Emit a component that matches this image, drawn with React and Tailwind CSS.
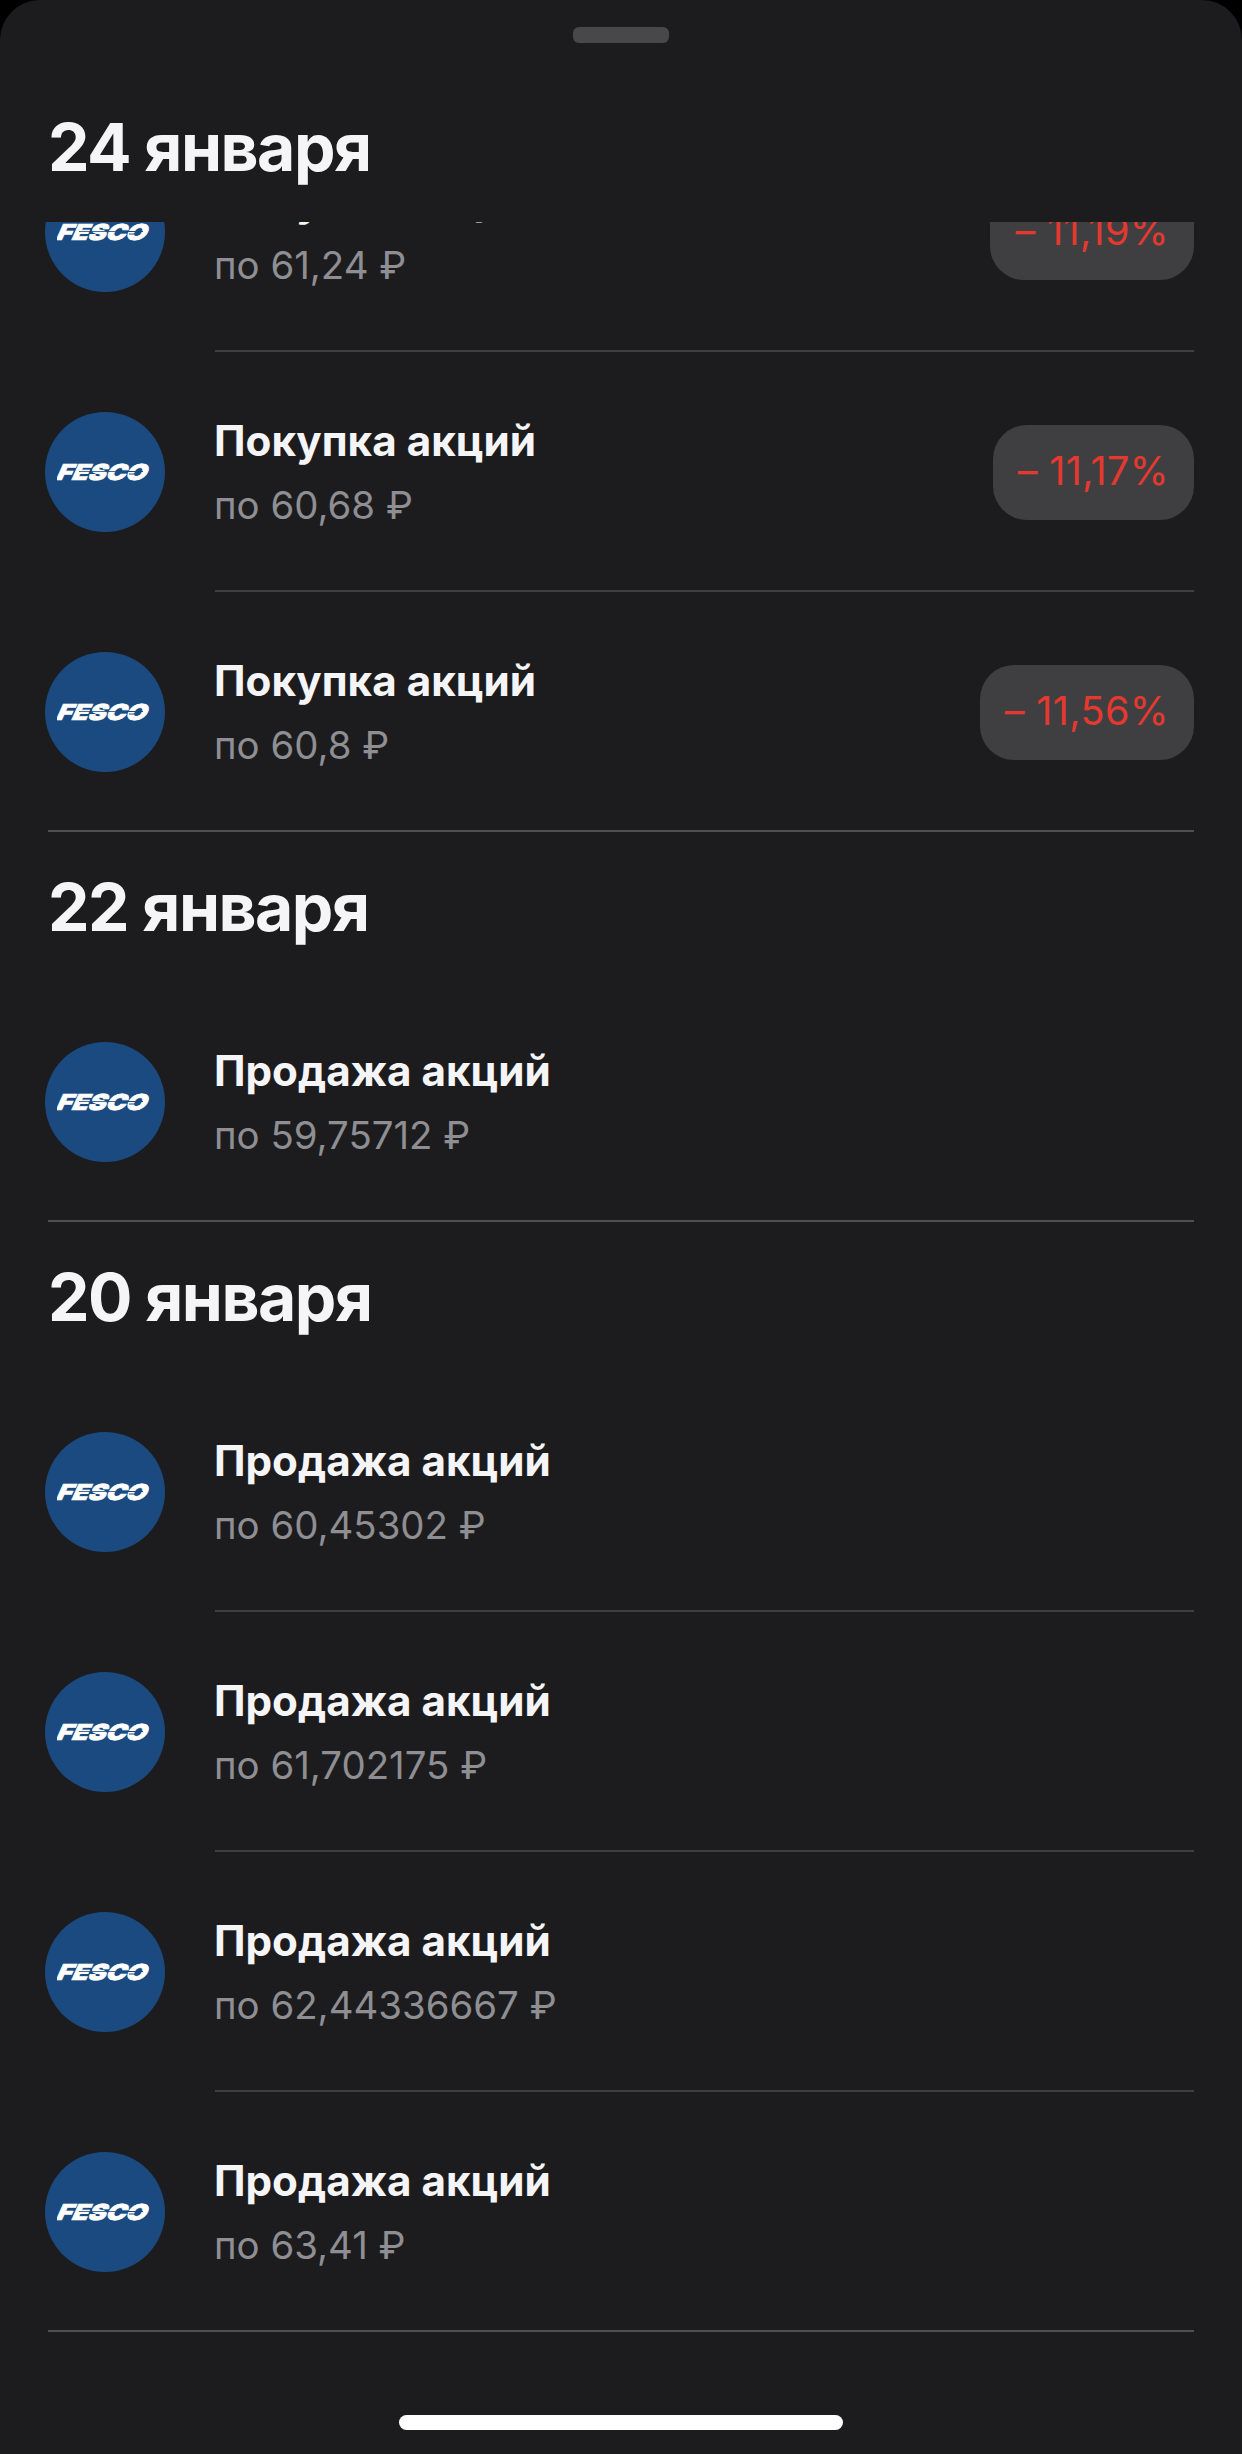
import React from "react";

const sections = [
  {
    title: "22 января",
    rows: [{ name: "Продажа акций", price: "по 59,75712 ₽" }],
  },
  {
    title: "20 января",
    rows: [
      { name: "Продажа акций", price: "по 60,45302 ₽" },
      { name: "Продажа акций", price: "по 61,702175 ₽" },
      { name: "Продажа акций", price: "по 62,44336667 ₽" },
      { name: "Продажа акций", price: "по 63,41 ₽" },
    ],
  },
];

const firstRows = [
  { name: "Покупка акций", price: "по 61,24 ₽", change: "– 11,19%" },
  { name: "Покупка акций", price: "по 60,68 ₽", change: "– 11,17%" },
  { name: "Покупка акций", price: "по 60,8 ₽", change: "– 11,56%" },
];

const Logo = () => (
  <div className="w-[120px] h-[120px] shrink-0 rounded-full bg-[#1a4a7f] flex items-center justify-center">
    <svg width="96" height="20" viewBox="0 0 96 20">
      <g transform="translate(6 0) skewX(-24)">
        <text
          x="0"
          y="18"
          fontFamily="Inter, sans-serif"
          fontWeight="900"
          fontSize="22"
          fill="#ffffff"
          stroke="#ffffff"
          strokeWidth="0.7"
          textLength="90"
          lengthAdjust="spacingAndGlyphs"
        >
          FESCO
        </text>
      </g>
      <path d="M22 9.5h50" stroke="#1a4a7f" strokeWidth="0.8" />
      <path d="M70 9.5h16M72 12h11" stroke="#1a4a7f" strokeWidth="1.1" />
    </svg>
  </div>
);

const Row = ({ name, price, change, last }) => (
  <div className="h-[240px] flex items-center pl-[45px] pr-[48px] relative">
    <Logo />
    <div className="ml-[49px] flex-1 flex items-center justify-between h-full">
      <div>
        <p className="text-[42.2px] leading-[56px] font-bold text-[#f5f5f7]">{name}</p>
        <p className="text-[38.4px] leading-[52px] mt-[10px] text-[#8e8e93]">{price}</p>
      </div>
      {change && (
        <div className="h-[95px] px-[25px] rounded-[34px] bg-[#3f3f41] flex items-center text-[39.5px] tracking-[0.4px] text-[#e5392f]">
          {change}
        </div>
      )}
    </div>
    <div className={`absolute right-[48px] bottom-0 h-[2px] ${last ? "left-[48px] bg-[#4f4f51]" : "left-[215px] bg-[#3f3f41]"}`} />
  </div>
);

const Title = ({ children }) => (
  <h2 className="text-[66px] leading-[80px] font-bold tracking-[-1.5px] text-[#f5f5f7]">{children}</h2>
);

const Section = ({ title, rows }) => (
  <section>
    <div className="h-[150px] px-[48px] flex items-center">
      <Title>{title}</Title>
    </div>
    {rows.map((row, i) => (
      <Row key={i} {...row} last={i === rows.length - 1} />
    ))}
  </section>
);

export default function App() {
  return (
    <div className="w-[1242px] h-[2454px] bg-black overflow-hidden" style={{ fontFamily: "Inter, 'Noto Sans', sans-serif" }}>
      <div className="h-full rounded-t-[40px] bg-[#1c1c1e] flex flex-col relative">
        <header className="h-[222px] shrink-0 px-[48px] pt-[27px]">
          <div className="w-[96px] h-[16px] mx-auto rounded-[6px] bg-[#48484a]" />
          <div className="mt-[64px]">
            <Title>24 января</Title>
          </div>
        </header>

        <div className="flex-1 overflow-hidden">
          <div className="-mt-[110px]">
            {firstRows.map((row, i) => (
              <Row key={i} {...row} last={i === firstRows.length - 1} />
            ))}
            {sections.map((s) => (
              <Section key={s.title} {...s} />
            ))}
          </div>
        </div>

        <div className="absolute bottom-[24px] left-[399px] w-[444px] h-[15px] rounded-full bg-white" />
      </div>
    </div>
  );
}
